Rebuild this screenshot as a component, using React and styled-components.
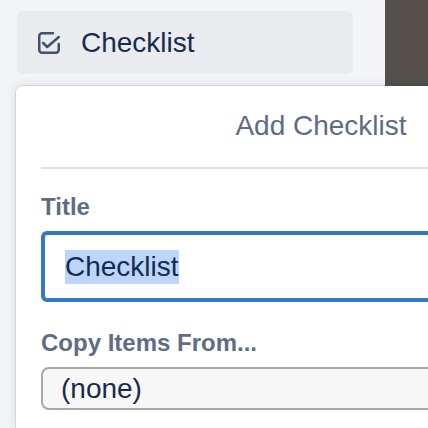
import React from 'react'
import styled, { createGlobalStyle } from 'styled-components'

const GlobalStyle = createGlobalStyle`
  html, body {
    margin: 0;
    padding: 0;
    background: #f3f4f6;
    font-family: "Liberation Sans", Arial, sans-serif;
    overflow: hidden;
  }
`

const Page = styled.div`
  width: 428px;
  height: 428px;
  display: flex;
  flex-direction: column;
  overflow: hidden;
`

const TopRow = styled.div`
  display: flex;
  height: 86px;
  padding-left: 17px;
`

const SidebarButton = styled.button`
  width: 336px;
  height: 63px;
  margin-top: 11px;
  padding: 0 0 0 21px;
  display: flex;
  align-items: center;
  gap: 21px;
  border: none;
  border-radius: 6px;
  background: #eaebef;
  color: #172b4d;
  font-family: inherit;
  font-size: 28px;
  cursor: pointer;
`

const DarkPanel = styled.div`
  width: 43px;
  margin-left: auto;
  background: #55504b;
`

const Popover = styled.div`
  width: 610px;
  flex: 1;
  margin-left: 16px;
  background: #fff;
  border-radius: 6px 6px 0 0;
  box-shadow: 0 0 0 1px rgba(9, 30, 66, 0.1), 0 0 12px rgba(9, 30, 66, 0.12);
`

const Header = styled.div`
  margin: 0 25px;
  height: 83px;
  line-height: 80px;
  text-align: center;
  color: #5e6c84;
  font-size: 28px;
  border-bottom: 2px solid #dfe1e6;
  box-sizing: border-box;
`

const Body = styled.div`
  padding: 22px 25px 0;
  display: flex;
  flex-direction: column;
`

const Label = styled.label`
  display: block;
  font-size: 24px;
  line-height: 32px;
  font-weight: 700;
  color: #5e6c84;
  margin-bottom: 8px;
`

const TextField = styled.div`
  height: 71px;
  box-sizing: border-box;
  border: 4px solid #317abf;
  border-radius: 6px;
  padding: 0 20px;
  display: flex;
  align-items: center;
  font-size: 28px;
  color: #172b4d;
  margin-bottom: 25px;
`

const Selected = styled.span`
  display: inline-block;
  line-height: 34px;
  background: #bbd6fa;
`

const Select = styled.select`
  appearance: none;
  height: 43px;
  box-sizing: border-box;
  border: 2px solid #a8a8a8;
  border-radius: 8px;
  background: #f7f7f7;
  padding: 0 18px;
  font-family: inherit;
  font-size: 28px;
  color: #172b4d;
`

const CheckIcon = () => (
  <svg width="22" height="22" viewBox="0 0 22 22" fill="none" stroke="#42526e" strokeWidth="2.5" strokeLinecap="round" strokeLinejoin="round">
    <path d="M15 1.25H4A2.75 2.75 0 0 0 1.25 4v14A2.75 2.75 0 0 0 4 20.75h14a2.75 2.75 0 0 0 2.75-2.75v-6" />
    <path d="M5.2 11l4 4L20.8 5" />
  </svg>
)

export default function App() {
  return (
    <Page>
      <GlobalStyle />
      <TopRow>
        <SidebarButton>
          <CheckIcon />
          Checklist
        </SidebarButton>
        <DarkPanel />
      </TopRow>
      <Popover>
        <Header>Add Checklist</Header>
        <Body>
          <Label>Title</Label>
          <TextField>
            <Selected>Checklist</Selected>
          </TextField>
          <Label>Copy Items From...</Label>
          <Select defaultValue="none">
            <option value="none">(none)</option>
          </Select>
        </Body>
      </Popover>
    </Page>
  )
}
